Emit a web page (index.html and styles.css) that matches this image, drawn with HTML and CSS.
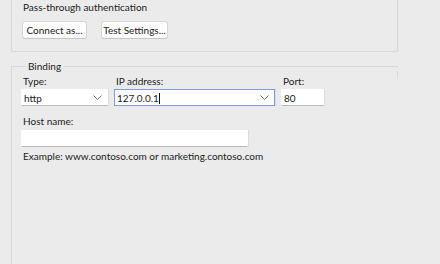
FILE: index.html
```html
<html>

<head>
    <link rel="stylesheet" href="styles.css">
</head>

<body>
    <!-- credentials group (top cut off) -->
    <div class="group group-top">
        <div class="group-title">Pass-through authentication</div>
        <div class="button-row">
            <button type="button" class="win-button btn-connect">Connect as...</button>
            <button type="button" class="win-button btn-test">Test Settings...</button>
        </div>
    </div>

    <!-- binding group -->
    <fieldset class="group group-binding">
        <legend>Binding</legend>
        <div class="field-row">
            <div class="field field-type">
                <div class="field-title">Type:</div>
                <div class="combo">
                    <span class="combo-value">http</span>
                    <svg class="chevron" width="9" height="5" viewBox="0 0 9 5"><path d="M0.5 0.5 L4.5 4.5 L8.5 0.5" fill="none" stroke="#777" stroke-width="1"/></svg>
                </div>
            </div>
            <div class="field field-ip">
                <div class="field-title">IP address:</div>
                <div class="combo combo-focus">
                    <span class="combo-value">127.0.0.1<span class="caret"></span></span>
                    <svg class="chevron" width="9" height="5" viewBox="0 0 9 5"><path d="M0.5 0.5 L4.5 4.5 L8.5 0.5" fill="none" stroke="#777" stroke-width="1"/></svg>
                </div>
            </div>
            <div class="field field-port">
                <div class="field-title">Port:</div>
                <div class="text-box">80</div>
            </div>
        </div>
        <div class="field field-host">
            <div class="field-title">Host name:</div>
            <div class="text-box"></div>
        </div>
        <div class="hint">Example: www.contoso.com or marketing.contoso.com</div>
    </fieldset>
</body>

</html>
```

FILE: styles.css
```css
* {
    margin: 0;
    padding: 0;
    box-sizing: border-box;
}

html {
    height: 100%;
    background: #ebebeb;
}

body {
    font-family: Lato, "Noto Sans", sans-serif;
    font-size: 10px;
    color: #1b1b1b;
    overflow: hidden;
}

.group {
    border: 1px solid #d9d9d9;
    width: 387px;
    margin-left: 11px;
}

/* only the bottom of this box is visible */
.group-top {
    margin-top: -20px;
    height: 72px;
    padding: 20px 0 0 10px;
}

.group-title {
    line-height: 12px;
    padding-left: 1px;
}

.button-row {
    display: flex;
    gap: 14px;
    margin-top: 8px;
}

.win-button {
    height: 18px;
    background: #fdfdfd;
    border: 1px solid #d6d6d6;
    border-bottom-color: #c4c4c4;
    border-radius: 3px;
    font-family: inherit;
    font-size: 10px;
    color: #1b1b1b;
    padding: 0;
    white-space: nowrap;
}

.btn-connect {
    width: 65px;
}

.btn-test {
    width: 67px;
}

/*binding*/

.group-binding {
    position: relative;
    margin-top: 8px;
    height: 206px;
    border-right: none;
    border-bottom: none;
    padding: 3px 0 0 9px;
}

.group-binding:after {
    content: '';
    position: absolute;
    right: 0;
    top: -1px;
    width: 1px;
    height: 12px;
    background: linear-gradient(#d4d4d4, #ebebeb);
}

.group-binding legend {
    margin-left: 5px;
    padding: 0 2px;
    line-height: 12px;
}

.field-row {
    display: flex;
    gap: 6px;
}

.field {
    display: flex;
    flex-direction: column;
    gap: 2px;
}

.field-title {
    line-height: 12px;
    padding-left: 2px;
}

.combo,
.text-box {
    height: 17px;
    background: white;
    border: 1px solid #fff;
    border-bottom-color: #b9b9b9;
    box-shadow: 1px 0 0 #dcdcdc;
    display: flex;
    align-items: center;
    padding-left: 2px;
    line-height: 14px;
}

.combo {
    justify-content: space-between;
    padding-right: 5px;
}

.combo-focus {
    border: 1px solid #7a9fde;
}

.caret {
    display: inline-block;
    width: 1px;
    height: 11px;
    background: #111;
    vertical-align: -2px;
}

.field-type {
    width: 87px;
}

.field-ip {
    width: 161px;
}

.field-port {
    width: 43px;
}

.field-host {
    width: 227px;
    margin-top: 9px;
    gap: 3px;
}

.hint {
    margin-top: 3px;
    padding-left: 2px;
    line-height: 12px;
}
```
